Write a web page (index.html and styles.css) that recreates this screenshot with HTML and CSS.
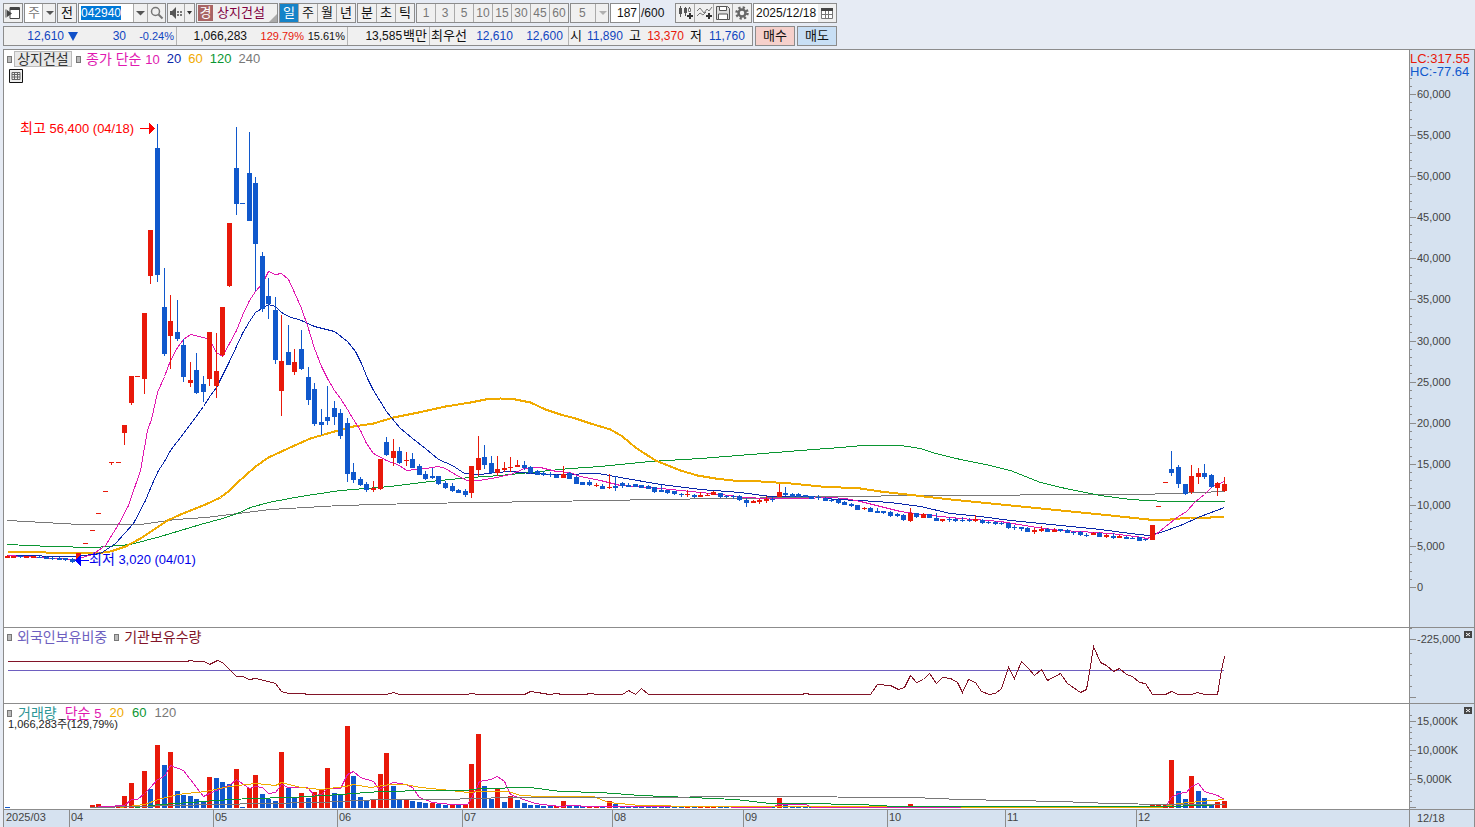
FILE: index.html
```html
<!DOCTYPE html>
<html lang="ko">
<head>
    <meta charset="UTF-8">
    <meta name="viewport" content="width=device-width, initial-scale=1.0">
    <title>상지건설 042940</title>
    <link rel="stylesheet" href="styles.css">
</head>
<body>
    <!-- Toolbar -->
    <div class="toolbar">
        <div class="tool-row">
            <div class="group w-icon">
                <button class="tool" aria-label="창 이동"><svg width="16" height="14"><path d="M5 1.5h9.500v11H5z" fill="#fff" stroke="#444"/><path d="M5 2h9v2H5z" fill="#444"/><path d="M1 3.500v8" stroke="#444"/><path d="M2 4l5 3.500-5 3.500z" fill="#444"/></svg></button>
            </div>
            <div class="group w-period">
                <select class="pick grey" aria-label="주기"><option>주</option></select>
                <svg class="arrow" width="13" height="18"><path d="M3 7h8L7 11z" fill="#555"/></svg>
            </div>
            <div class="group w-icon"><button class="tool">전</button></div>
            <div class="group w-code">
                <div class="code-box"><input class="code" value="042940" aria-label="종목코드"></div>
                <button class="tool w-drop" aria-label="종목 목록"><svg width="9" height="6"><path d="M0 1h9L4.500 5.500z" fill="#555"/></svg></button>
                <button class="tool" aria-label="검색"><svg width="14" height="14"><circle cx="5.500" cy="5.500" r="4" fill="none" stroke="#777" stroke-width="1.500"/><path d="M8.500 8.500l4 4" stroke="#777" stroke-width="2"/></svg></button>
            </div>
            <div class="group w-sound">
                <button class="tool" aria-label="소리"><svg width="14" height="12"><path d="M1 4h2l4-4v12L3 8H1z" fill="#555"/><path d="M8 4h2v2H8zM8 7h2v2H8zM11 4h2v2h-2zM11 7h2v2h-2z" fill="#777"/></svg></button>
                <button class="tool w-mini" aria-label="소리 설정"><svg width="5" height="4"><path d="M0 0h5L2.500 3.500z" fill="#333"/></svg></button>
            </div>
            <div class="group w-name">
                <span class="warn">경</span>
                <span class="stock">상지건설</span>
                <svg class="corner" width="8" height="8"><path d="M8 0v8H0z" fill="#aaa"/></svg>
            </div>
            <div class="group w-four">
                <button class="tool active">일</button>
                <button class="tool">주</button>
                <button class="tool">월</button>
                <button class="tool">년</button>
            </div>
            <div class="group w-three">
                <button class="tool">분</button>
                <button class="tool">초</button>
                <button class="tool">틱</button>
            </div>
            <div class="group w-minutes grey">
                <button class="tool">1</button>
                <button class="tool">3</button>
                <button class="tool">5</button>
                <button class="tool">10</button>
                <button class="tool">15</button>
                <button class="tool">30</button>
                <button class="tool">45</button>
                <button class="tool">60</button>
            </div>
            <div class="group w-custom">
                <select class="pick off grey" aria-label="분 선택"><option>5</option></select>
                <svg class="arrow" width="13" height="18"><path d="M3 7h8L7 11z" fill="#b0b0b0"/></svg>
            </div>
            <div class="group w-count"><input class="count" value="187" aria-label="표시 개수"></div>
            <span class="total">/600</span>
            <div class="group w-tools">
                <button class="tool" aria-label="차트 종류"><svg width="17" height="16"><path d="M3.500 1v11M8.500 2v9M12.500 2v5" stroke="#555"/><path d="M2 3h3v6H2zM7 3h3v5H7z" fill="#555"/><path d="M11.500 3.500h2v3h-2z" fill="#fff" stroke="#777"/><path d="M13 8v6M10 11h6" stroke="#333" stroke-width="2"/></svg></button>
                <button class="tool" aria-label="지표 추가"><svg width="17" height="16"><path d="M1 6l3-3 4 5 3-4 2 2 3-4M1 11l3-3 3 2 3-3" fill="none" stroke="#777"/><path d="M13 8v6M10 11h6" stroke="#333" stroke-width="2"/></svg></button>
                <button class="tool" aria-label="저장"><svg width="16" height="16"><path d="M1.500 1.500h11l2 2v11h-13z" fill="#ddd" stroke="#555"/><path d="M4.500 1.500h7v4h-7zM3.500 9h9v5.500h-9z" fill="#fff" stroke="#555"/></svg></button>
                <button class="tool" aria-label="설정"><svg width="14" height="14"><circle cx="7" cy="7" r="5.500" fill="none" stroke="#666" stroke-width="2.500" stroke-dasharray="2.200 2.120"/><circle cx="7" cy="7" r="3.500" fill="none" stroke="#666" stroke-width="2.500"/></svg></button>
            </div>
            <div class="group w-date">
                <input class="date" value="2025/12/18" aria-label="날짜">
                <button class="tool w-cal" aria-label="달력"><svg width="12" height="11"><path d="M.5.5h11v10H.5zM.5 6.500h11M4.500 3v7M7.500 3v7" fill="#fff" stroke="#777"/><path d="M0 0h12v3H0z" fill="#444"/></svg></button>
            </div>
        </div>

        <div class="quote-row">
            <div class="quotes">
                <div class="cell blue">
                    <span class="q60">12,610</span>
                    <span class="mark"><svg width="10" height="9"><path d="M0 0h10L5 9z" fill="#1050c8"/></svg></span>
                    <span class="q48">30</span>
                    <span class="q48 pct">-0.24%</span>
                </div>
                <div class="cell">
                    <span class="q70">1,066,283</span>
                    <span class="q57 pct red">129.79%</span>
                    <span class="q41 pct">15.61%</span>
                </div>
                <div class="cell"><span class="q79">13,585<span class="ko">백만</span></span></div>
                <div class="cell wide">
                    <span class="ko">최우선</span>
                    <span class="q46 blue">12,610</span>
                    <span class="q50 blue">12,600</span>
                </div>
                <div class="cell">
                    <span class="ko">시</span>
                    <span class="q41 blue">11,890</span>
                    <span class="ko q18">고</span>
                    <span class="q43 red">13,370</span>
                    <span class="ko q18">저</span>
                    <span class="q43 blue">11,760</span>
                </div>
            </div>
            <button class="order buy">매수</button>
            <button class="order sell">매도</button>
        </div>
    </div>

    <!-- Chart -->
    <div class="chart">
        <div class="panel">
            <svg class="plot" id="price"></svg>
            <div class="legend">
                <i class="dot"></i>
                <button class="item-name">상지건설</button>
                <i class="dot"></i>
                <span class="label ma-a">종가 단순 <span class="num">10</span></span>
                <span class="ma-b">20</span>
                <span class="ma-c">60</span>
                <span class="ma-d">120</span>
                <span class="ma-e">240</span>
            </div>
            <button class="grid-btn" aria-label="표 보기"><svg width="14" height="14"><path d="M.5.5h13v13H.5z" fill="#eee" stroke="#111"/><path d="M3 3.500h8v7H3zM3 5.500h8M3 8h8M5.500 3.500v7M8.500 3.500v7" fill="none" stroke="#666"/></svg></button>
        </div>
        <div class="scale"><svg class="plot" id="priceScale"></svg></div>

        <div class="panel">
            <svg class="plot" id="holding"></svg>
            <div class="legend">
                <i class="dot"></i>
                <span class="label hold-a">외국인보유비중</span>
                <i class="dot"></i>
                <span class="label hold-b">기관보유수량</span>
            </div>
        </div>
        <div class="scale">
            <svg class="plot" id="holdingScale"></svg>
            <button class="close" aria-label="닫기"><svg width="8" height="7"><path d="M2 2l4 3M6 2L2 5" stroke="#fff"/></svg></button>
        </div>

        <div class="panel">
            <svg class="plot" id="volume"></svg>
            <div class="legend loose">
                <i class="dot"></i>
                <span class="label vol">거래량</span>
                <span class="label ma-a">단순 <span class="num">5</span></span>
                <span class="ma-c">20</span>
                <span class="ma-d">60</span>
                <span class="ma-e">120</span>
            </div>
            <div class="volume-now">1,066,283주(129,79%)</div>
        </div>
        <div class="scale">
            <svg class="plot" id="volumeScale"></svg>
            <button class="close" aria-label="닫기"><svg width="8" height="7"><path d="M2 2l4 3M6 2L2 5" stroke="#fff"/></svg></button>
        </div>

        <div class="dates"><svg class="plot" id="dateScale"></svg></div>
        <div class="last-date">12/18</div>
    </div>

    <script src="script.js"></script>
</body>
</html>
```

FILE: styles.css
```css
* {
    margin: 0;
    padding: 0;
    box-sizing: border-box;
}

body {
    display: flex;
    flex-direction: column;
    height: 100vh;
    overflow: hidden;
    background-color: #e6ebf4;
    color: #111;
    font-family: "Liberation Sans", "Noto Sans CJK KR", sans-serif;
    font-size: 12px;
    line-height: 16px;
}

button, input, select {
    font: inherit;
    color: inherit;
    border: 0;
    outline: 0;
    background: none;
}

svg {
    display: block;
    flex: none;
}

/* Toolbar */
.toolbar {
    padding: 3px;
}

.tool-row {
    display: flex;
    gap: 1px;
    height: 20px;
}

.group {
    position: relative;
    display: flex;
    flex: none;
    align-items: stretch;
    border: 1px solid #8c8c8c;
    background-color: #f0f0f0;
}

.tool {
    display: flex;
    flex: 1;
    min-width: 0;
    align-items: center;
    justify-content: center;
    font-size: 13px;
    background-color: #f0f0f0;
    cursor: pointer;
}

.tool + .tool {
    border-left: 1px solid #aaa;
}

.tool.active {
    background-color: #1583c8;
    color: #fff;
}

.grey {
    color: #777;
}

.w-minutes .tool {
    font-size: 12px;
}

.w-icon { width: 20px; }
.w-period { width: 32px; }
.w-code { width: 88px; }
.w-sound { width: 28px; }
.w-name { width: 82px; }
.w-four { width: 77px; }
.w-three { width: 58px; }
.w-minutes { width: 153px; }
.w-custom { width: 39px; }
.w-count { width: 30px; }
.w-tools { width: 77px; }
.w-date { width: 84px; }

.group .w-drop {
    flex: none;
    width: 14px;
    border-left: 1px solid #aaa;
}

.group .w-mini {
    flex: none;
    width: 10px;
}

.group .w-cal {
    flex: none;
    width: 18px;
}

.pick {
    width: 100%;
    padding-left: 3px;
    font-size: 13px;
    appearance: none;
    background-color: #fff;
}

.pick.off {
    padding-left: 8px;
    font-size: 12px;
    background-color: #f0f0f0;
}

.arrow {
    position: absolute;
    top: 0;
    right: 0;
    border-left: 1px solid #aaa;
    background-color: #f0f0f0;
    pointer-events: none;
}

.code-box {
    flex: none;
    width: 54px;
    padding: 2px;
    background-color: #fff;
}

.code {
    display: block;
    width: 40px;
    height: 14px;
    background-color: #0078d7;
    color: #fff;
}

.warn {
    width: 15px;
    margin: 1px;
    background-color: #a86464;
    color: #fff;
    font-size: 13px;
    text-align: center;
}

.stock {
    padding-left: 3px;
    font-size: 13px;
    line-height: 18px;
    color: #800040;
}

.corner {
    position: absolute;
    right: 0;
    bottom: 0;
}

.count {
    width: 100%;
    padding-right: 2px;
    text-align: right;
    background-color: #fff;
}

.total {
    width: 33px;
    line-height: 20px;
}

.date {
    width: 64px;
    padding-left: 2px;
    background-color: #fff;
}

.w-date {
    background-color: #fff;
}

/* Quote line */
.quote-row {
    display: flex;
    gap: 2px;
    height: 20px;
    margin-top: 3px;
}

.quotes {
    display: flex;
    width: 750px;
    border: 1px solid #8c8c8c;
    background-color: #f0f0f0;
    line-height: 18px;
}

.cell {
    display: flex;
    padding-right: 2px;
    text-align: right;
    white-space: nowrap;
    border-right: 1px solid #b4b4b4;
}

.cell:last-child {
    border: 0;
}

.cell.wide {
    padding-right: 5px;
}

.ko {
    padding-left: 1px;
    font-size: 13px;
}

.mark {
    display: flex;
    width: 14px;
    align-items: center;
    justify-content: flex-end;
}

.pct { font-size: 11px; }
.q18 { width: 18px; }
.q41 { width: 41px; }
.q43 { width: 43px; }
.q46 { width: 46px; }
.q48 { width: 48px; }
.q50 { width: 50px; }
.q57 { width: 57px; }
.q60 { width: 60px; }
.q70 { width: 70px; }
.q79 { width: 79px; }
.blue { color: #1046c0; }
.red { color: #e8190a; }

.order {
    width: 40px;
    border: 1px solid #8c8c8c;
    font-size: 13px;
    cursor: pointer;
}

.buy { background-color: #f5d0cb; }
.sell { background-color: #c8dff5; }

/* Chart */
.chart {
    display: grid;
    flex: 1;
    min-height: 0;
    grid-template-columns: 1fr 65px;
    grid-template-rows: minmax(0, 577fr) minmax(0, 76fr) minmax(0, 106fr) 18px;
    margin-left: 3px;
    border: 1px solid #8c8c8c;
    border-bottom: 0;
}

.panel, .scale {
    position: relative;
    min-width: 0;
}

.panel {
    background-color: #fff;
}

.scale {
    border-left: 1px solid #8c8c8c;
    background-color: #d6e2f0;
}

.scale ~ .panel, .panel ~ .scale ~ .scale {
    border-top: 1px solid #8c8c8c;
}

.plot {
    position: absolute;
    inset: 0;
    width: 100%;
    height: 100%;
    shape-rendering: crispEdges;
}

.dates, .last-date {
    position: relative;
    border-top: 1px solid #8c8c8c;
    background-color: #d6e2f0;
    color: #444;
    font-size: 11px;
}

.last-date {
    padding-left: 7px;
    border-left: 1px solid #8c8c8c;
}

.plot text {
    fill: #444;
    font-size: 11px;
}

.plot .big {
    font-size: 13px;
}

.plot .ko {
    font-size: 14px;
}

.legend {
    position: absolute;
    top: 0;
    left: 3px;
    display: flex;
    height: 18px;
    align-items: center;
    gap: 7px;
    font-size: 13px;
    line-height: 14px;
    white-space: nowrap;
}

.legend.loose {
    gap: 8px;
}

.dot {
    width: 5px;
    height: 7px;
    border: 1px solid #777;
    background-color: #bbb;
}

.legend .label {
    font-size: 14px;
}

.dot + .label {
    margin-left: -2px;
}

.legend .num {
    font-size: 13px;
}

.item-name {
    width: 58px;
    height: 16px;
    margin: 0 -3px 0 -5px;
    border: 1px solid #bbb;
    background-color: #e8e8e8;
    color: #333;
    font-size: 14px;
    line-height: 14px;
}

.grid-btn {
    position: absolute;
    top: 19px;
    left: 5px;
}

.volume-now {
    position: absolute;
    top: 14px;
    left: 4px;
    font-size: 11px;
    line-height: 12px;
    color: #222;
}

.close {
    position: absolute;
    top: 3px;
    right: 2px;
    background-color: #444;
}

.ma-a { color: #e018b0; }
.ma-b { color: #0a28aa; }
.ma-c { color: #f0aa00; }
.ma-d { color: #0a9632; }
.ma-e { color: #787878; }
.hold-a { color: #6e5fc0; }
.hold-b { color: #821428; }
.vol { color: #2d9696; }
```

FILE: script.js
```js
// Plot area on the base layout; everything is scaled from it to the real size
const BASE_W = 1405;
const LEFT = 4;
const RED = "#e8190a";
const BLUE = "#1058cc";

// colour high top bottom low, one entry per day
const candles = `r555 556 558 558,r556 556 558 558,b556 556 557 558,r556 556 558 558,r556 556 558 558,b556 557 558 558,
b556 557 559 559,b557 558 559 560,b557 558 560 560,b558 558 560 561,b558 559 562 563,r553 553 559 562,
r543 543 544 544,r530 530 531 531,r513 513 514 514,r491 491 492 492,r462 462 463 465,r462 462 463 463,
r425 425 433 445,r376 376 403 405,r376 376 377 377,r313 313 379 394,r230 230 276 284,b124 148 275 282,
b268 307 354 356,r295 321 336 369,b300 332 339 341,b339 345 377 382,r362 380 383 387,b353 370 393 394,
b376 384 392 402,r332 332 379 386,r333 371 386 398,r307 307 355 357,r223 223 286 287,b127 168 204 215,
b203 203 204 204,b132 173 221 221,b177 183 244 291,b252 256 309 312,b278 296 304 319,b297 310 360 364,
r315 361 391 416,b325 352 365 365,r349 362 372 375,b330 349 369 370,b367 377 400 405,b383 389 424 426,
b409 422 425 435,b386 417 421 425,b401 408 417 425,b409 413 436 439,b418 423 474 482,b463 472 480 483,
b477 479 485 486,b482 484 490 492,r481 488 490 492,r459 459 489 490,b437 442 455 456,r439 451 458 466,
b447 451 463 464,r452 460 461 466,b453 459 468 468,b464 466 475 475,b471 474 479 480,b468 476 478 479,
b476 476 484 485,b481 483 488 489,b483 486 491 492,b489 490 493 493,b489 491 495 497,r466 466 493 498,
r436 458 470 476,b445 457 465 469,b456 463 473 474,r456 469 473 476,r462 468 470 472,r457 467 468 472,
r460 465 467 467,b461 465 468 470,b466 467 473 474,b470 471 475 475,b471 473 475 476,b472 474 475 477,
b474 475 478 478,r466 474 478 478,b472 473 479 479,b476 477 484 484,b482 482 485 485,b480 482 485 486,
r483 485 486 487,b484 486 489 489,r474 487 488 489,b476 486 488 491,b482 483 486 488,b483 485 487 487,
b484 484 487 487,b485 485 488 488,b485 486 489 489,b487 487 492 493,b485 490 492 492,b490 490 493 494,
b491 491 494 495,b493 494 495 497,r490 494 495 497,b494 495 497 498,r492 495 497 497,r493 495 496 496,
r491 492 495 495,b493 493 497 498,b495 496 497 498,b495 496 497 499,b495 496 500 501,b498 500 503 507,
r500 501 503 503,r499 500 502 504,r496 499 501 503,b497 499 500 502,r484 492 497 497,b487 493 495 496,
b493 494 497 497,b493 494 497 497,b495 495 497 497,b496 496 499 499,b495 497 498 500,b497 498 501 501,
b498 500 501 502,b498 500 503 504,b501 502 505 505,b503 504 506 507,b505 505 510 510,r507 508 509 510,
b507 508 512 512,b508 511 513 513,b511 511 513 514,b511 512 516 517,b513 514 516 517,b514 515 520 521,
r508 513 521 522,b513 513 517 518,r513 514 518 518,b514 514 518 518,b513 518 521 521,r519 519 521 522,
b517 519 520 522,b518 519 521 522,b517 520 521 522,b518 520 521 522,r515 519 521 522,b519 520 523 524,
b521 522 523 524,b521 522 524 525,b522 523 524 525,b523 523 528 529,b525 527 528 530,b527 527 529 531,
b527 528 532 532,r528 530 532 534,r526 529 531 532,b528 529 532 532,r528 530 532 532,b529 529 531 532,
b529 530 533 533,b531 532 533 535,b531 532 535 536,b533 535 536 537,r532 533 535 535,b532 533 537 537,
r534 535 537 538,b533 536 538 539,r535 536 538 538,b536 537 539 539,b537 538 539 539,b537 537 541 541,
b539 539 540 541,r525 525 540 540,r506 506 507 507,r482 482 483 483,b451 469 473 476,b465 467 484 488,
b484 484 494 495,r465 476 492 494,r468 473 477 484,b464 473 477 479,b474 475 487 488,r482 483 488 496,
r477 484 491 492`.split(",").map(s => {
    s = s.trim();
    return [s[0]].concat(s.slice(1).split(" ").map(Number));
});

// volume bar tops, keyed by day index; the rest are one pixel high
const bars = {};
function addBars(start, list) {
    list.split(" ").forEach((s, i) => bars[start + i] = [s[0], Number(s.slice(1))]);
}
addBars(0, "b807");
addBars(13, "r805 r804 r807 r806 r807 r796 r783 r807 r771 b789 r745 b765 r752 b791 b795 b796 b799 b801 r777 b778 b782 b784 r769 b807 r788 r775 b794 b799 b801 r752 b788 b797 r793 b798 r792 r790 r768 b793 b794 r726 b776 b797 b800 r799 r774 r753 b786 b799 r799 b801 b802 b803 r803 b804 b805 r805 b804 r805 r764 r734 b786 b799 r789 b802 r796 b800 b803 b805 b805 b806 b806 r806 r801 b806 b806 b806 r806");
addBars(92, "r801 b804 b806 b806 b806");
addBars(118, "r798 b805");
addBars(138, "r804");
addBars(175, "r805 r805 r804 r760 b791 b799 r776 b791 b798 b804 r802 r801");

const priceLines = [
    ["#787878", 1, "7,520 25,521 80,524 140,524 175,519 205,517 230,514 270,509 340,505 415,503 545,501 600,500 720,498 800,497 825,496 862,496 900,495 1140,494 1170,493 1224,491"],
    ["#0a9632", 1, "7,544 50,546 95,547 130,544 160,536 200,524 222,518 237,513 250,507 268,502 300,496 340,490 390,486 430,481 470,477 500,475 530,472 570,468 600,466 650,461 700,458 750,454 800,450 840,447 862,445 900,445 920,448 935,453 960,459 985,464 1010,470 1040,482 1065,488 1100,495 1130,499 1165,501 1224,501"],
    ["#f0aa00", 2, "7,551 27,551 45,552 95,553 110,551 125,546 140,538 152,530 167,520 180,514 205,504 220,497 228,491 236,483 255,466 268,457 294,445 310,438 334,431 353,426 373,423 393,417 418,412 445,406 470,402 485,399 500,398 515,399 530,402 545,409 560,414 575,418 590,423 610,429 622,436 635,447 655,460 680,470 697,475 715,478 732,480 760,481 790,483 820,486 860,488 880,491 915,495 950,499 1000,504 1040,508 1080,512 1110,515 1148,519 1170,519 1190,517 1210,517 1224,516"],
    ["#0a28aa", 1, "7,555 75,556 100,553 115,543 133,523 145,500 152,483 158,470 164,461 170,450 180,437 192,421 203,406 210,395 216,387 229,361 236,346 242,333 249,321 255,312 268,304 275,306 281,312 288,316 301,320 314,326 334,331 347,341 355,351 361,363 367,378 373,390 386,411 399,427 412,438 425,448 438,459 452,465 464,473 480,474 495,472 510,471 530,473 560,474 598,473 620,477 660,484 700,489 740,492 770,496 810,496 835,499 860,500 890,502 920,506 950,513 980,516 1010,520 1050,524 1100,529 1130,533 1148,535 1160,532 1180,525 1200,516 1224,507"],
    ["#e018b0", 1, "7,555 40,557 75,559 92,554 105,545 118,524 128,505 140,470 147,430 151,419 157,392 164,376 170,360 177,347 183,339 190,334 203,337 209,339 216,352 222,356 229,343 236,330 242,315 249,300 255,291 262,283 268,271 275,274 281,273 288,279 294,292 301,308 307,325 314,348 321,366 327,378 334,390 340,398 347,409 353,419 360,430 366,443 373,453 386,460 399,465 406,470 425,468 438,466 445,468 458,476 467,480 478,480 491,478 510,474 524,468 540,467 556,471 569,472 580,476 600,480 620,485 660,488 690,491 720,494 745,497 765,498 800,498 830,497 845,498 860,501 900,511 930,515 960,518 1000,521 1030,526 1060,530 1080,531 1110,533 1135,536 1147,538 1158,532 1165,526 1178,516 1186,511 1195,501 1204,494 1212,486 1224,481"]
];

const holdingLines = [
    ["#6e5fc0", 1, "7,670 1223,670"],
    ["#821428", 1, "7,661 186,661 190,660 195,661 204,661 209,664 217,660 222,662 229,669 236,676 242,676 249,679 255,678 268,681 275,683 281,691 288,693 304,693 306,694 386,694 393,692 399,694 466,694 471,693 478,694 524,694 530,691 537,692 549,694 556,693 562,694 585,694 589,693 598,694 622,694 628,690 635,694 641,688 648,694 801,694 805,693 811,694 870,694 877,684 890,685 898,689 904,687 910,675 916,682 923,679 929,673 936,683 942,677 950,678 957,682 962,692 968,679 975,682 981,691 989,694 995,693 1001,688 1008,667 1014,678 1021,661 1028,668 1034,675 1041,669 1047,680 1060,673 1067,683 1080,692 1086,689 1089,672 1093,646 1100,662 1106,665 1113,671 1119,668 1126,674 1132,676 1139,682 1145,683 1152,694 1165,694 1171,691 1178,694 1191,694 1197,692 1204,694 1217,694 1221,670 1224,656"]
];

const volumeLines = [
    ["#e018b0", 1, "90,807 105,806 124,805 131,799 137,799 144,793 150,787 157,779 164,776 170,765 183,770 196,787 203,796 209,793 216,790 229,785 236,779 249,788 255,786 262,787 268,793 275,792 281,784 288,787 307,787 314,795 321,794 327,788 340,788 347,774 353,771 360,777 373,781 379,789 386,785 393,782 406,784 412,787 419,797 432,802 451,804 467,804 471,798 479,781 490,779 497,776 504,781 510,794 523,799 535,803 550,805 560,806 570,805 590,806 690,806 770,807 779,804 805,804 812,807 1158,807 1165,806 1171,797 1178,793 1186,792 1191,786 1198,783 1204,791 1217,795 1224,799"],
    ["#f0aa00", 1, "120,807 144,804 158,799 177,794 205,791 229,786 255,783 275,785 281,782 300,787 320,789 345,786 353,784 370,787 390,784 405,784 420,787 450,790 468,792 480,791 508,791 520,795 540,796 593,796 608,802 640,805 700,806 860,806 1060,807 1160,807 1178,803 1200,801 1224,799"],
    ["#0a9632", 1, "135,807 160,804 190,802 215,800 250,798 290,797 340,794 380,791 430,790 465,790 480,788 530,787 560,791 600,792 640,795 690,797 735,799 770,803 800,803 860,804 895,806 1165,806 1200,805 1224,804"],
    ["#787878", 1, "90,807 140,806 170,805 220,804 260,803 320,802 380,799 450,799 470,798 512,797 620,797 760,796 912,797 960,799 1010,800 1060,801 1110,803 1165,804 1224,804"]
];

const months = [["2025/03", 4], ["04", 69], ["05", 213], ["06", 337], ["07", 462], ["08", 612], ["09", 743], ["10", 887], ["11", 1005], ["12", 1136]];

// returns scaling helpers for one svg
function frame(id, top, height) {
    const svg = document.getElementById(id);
    const sx = svg.clientWidth / BASE_W;
    const sy = svg.clientHeight / height;
    return {
        svg: svg,
        x: v => (v - LEFT) * sx,
        y: v => (v - top) * sy
    };
}

function rect(x, y, w, h, color) {
    return `<rect x="${x}" y="${y}" width="${w}" height="${h}" fill="${color}"/>`;
}

function lines(f, list) {
    return list.map(([color, width, text]) => {
        const pts = text.split(" ").map(p => {
            const [x, y] = p.split(",").map(Number);
            return (f.x(x) + 0.5) + "," + (f.y(y) + 0.5);
        }).join(" ");
        return `<polyline points="${pts}" fill="none" stroke="${color}" stroke-width="${width}"/>`;
    }).join("");
}

function dayX(f, i) {
    return Math.round(f.x(Math.floor(7 + i * 6.5445)));
}

function drawPrice() {
    const f = frame("price", 50, 577);
    // lines go under the candles
    let out = lines(f, priceLines);
    candles.forEach(([c, high, top, bottom, low], i) => {
        const x = dayX(f, i);
        const color = c === "r" ? RED : BLUE;
        out += rect(x, f.y(high), 1, f.y(low) - f.y(high), color);
        out += rect(x - 2, f.y(top), 5, f.y(bottom) - f.y(top), color);
    });

    // highest and lowest marks
    const hx = f.x(155), hy = f.y(128);
    out += `<text class="big" x="${hx - 21}" y="${hy + 5}" text-anchor="end" style="fill:#f00"><tspan class="ko">최고</tspan> 56,400 (04/18)</text>`;
    out += rect(hx - 15, hy, 11, 1, "#f00") + `<path d="M${hx - 6} ${hy - 5}v11l6-5.500z" fill="#f00"/>`;
    const lx = f.x(75), ly = f.y(560);
    out += `<text class="big" x="${lx + 14}" y="${ly + 4}" style="fill:#0000e8"><tspan class="ko">최저</tspan> 3,020 (04/01)</text>`;
    out += rect(lx + 4, ly, 10, 1, "#00f") + `<path d="M${lx + 6} ${ly - 5}v11l-6-5.500z" fill="#00f"/>`;
    f.svg.innerHTML = out;
}

function drawHolding() {
    const f = frame("holding", 628, 75);
    f.svg.innerHTML = lines(f, holdingLines);
}

function drawVolume() {
    const f = frame("volume", 704, 105);
    let out = "";
    candles.forEach((candle, i) => {
        if (i > 0 && i < 13) return;
        const [c, top] = bars[i] || [candle[0], 807];
        out += rect(dayX(f, i) - 2, f.y(top), 5, f.y(808) - f.y(top), c === "r" ? RED : BLUE);
    });
    f.svg.innerHTML = out + lines(f, volumeLines);
}

// long ticks carry a label, short ones do not
function drawScale(id, top, height, major, minor, extra) {
    const f = frame(id, top, height);
    let out = extra || "";
    minor.forEach(v => out += rect(0, Math.round(f.y(v)), 2, 1, "#8c8c8c"));
    major.forEach(([v, label]) => {
        const y = Math.round(f.y(v));
        out += rect(0, y, 6, 1, "#8c8c8c") + `<text x="7" y="${y + 4}">${label}</text>`;
    });
    f.svg.innerHTML = out;
}

function drawScales() {
    const major = [], minor = [];
    for (let p = 0; p <= 60000; p += 5000) {
        major.push([587 - p * 493 / 60000, p.toLocaleString("en-US")]);
    }
    for (let p = 1000; p < 63000; p += 1000) {
        if (p % 5000) minor.push(587 - p * 493 / 60000);
    }
    drawScale("priceScale", 50, 577, major, minor,
        '<text class="big" x="0" y="13" style="fill:#e8190a">LC:317.55</text><text class="big" x="0" y="26" style="fill:#1058cc">HC:-77.64</text>');
    drawScale("holdingScale", 628, 75, [[639, "-225,000"], [697, ""]], [628, 653, 664, 675, 686]);
    const small = [];
    for (let i = 1; i < 17; i++) {
        if (i % 5) small.push(807 - i * 5.75);
    }
    drawScale("volumeScale", 704, 105, [[721, "15,000K"], [750, "10,000K"], [779, "5,000K"], [807, ""]], small);
}

function drawDates() {
    const f = frame("dateScale", 810, 17);
    f.svg.innerHTML = months.map(([label, x], i) => {
        const px = Math.round(f.x(x));
        return (i ? rect(px, 0, 1, 17, "#8c8c8c") : "") + `<text x="${px + 2}" y="11">${label}</text>`;
    }).join("");
}

function draw() {
    drawPrice();
    drawHolding();
    drawVolume();
    drawScales();
    drawDates();
}

window.addEventListener("resize", draw);
draw();
```
